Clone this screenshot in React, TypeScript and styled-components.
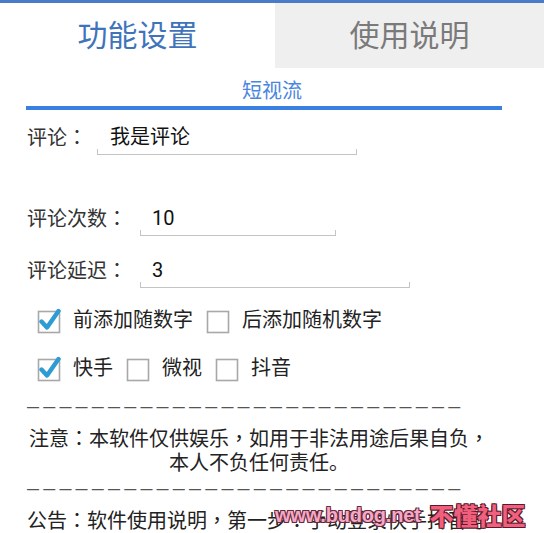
import React from "react";
import styled, { createGlobalStyle } from "styled-components";

const Global = createGlobalStyle`
  html, body { margin: 0; padding: 0; background: #fff; }
  body { font-family: Roboto, "Noto Sans CJK SC", sans-serif; color: #222; }
  * { box-sizing: border-box; }
`;

const Page = styled.div`
  position: relative;
  width: 544px;
  height: 533px;
  overflow: hidden;
  background: #fff;
`;

const TopLine = styled.div`
  height: 3px;
  background: #4a7bc6;
`;

const Tabs = styled.div`
  display: flex;
  height: 65px;
`;

const Tab = styled.div<{ $active?: boolean }>`
  display: flex;
  align-items: center;
  justify-content: center;
  padding-bottom: 5px;
  width: ${(p) => (p.$active ? "275px" : "auto")};
  flex: ${(p) => (p.$active ? "none" : "1")};
  background: ${(p) => (p.$active ? "#fff" : "#efefef")};
  color: ${(p) => (p.$active ? "#3f74bb" : "#7a7a7a")};
  font-family: "Noto Sans CJK SC", sans-serif;
  font-size: 30px;
  line-height: 1;
`;

const SubTitle = styled.div`
  text-align: center;
  color: #4a86e0;
  font-family: "Noto Sans CJK SC", sans-serif;
  font-size: 20px;
  line-height: 28px;
  margin-top: 8px;
`;

const Divider = styled.div`
  height: 4px;
  margin: 2px 42px 0 26px;
  background: #3a80e2;
`;

const P = styled.span`
  font-family: "Noto Sans CJK TC", "Noto Sans CJK SC", sans-serif;
`;

const FieldRow = styled.div<{ $top: number }>`
  display: flex;
  align-items: flex-start;
  margin-top: ${(p) => p.$top}px;
  padding-left: 27px;
`;

const Label = styled.div`
  font-size: 20px;
  line-height: 30px;
  height: 32px;
  color: #333;
  white-space: nowrap;
`;

const Field = styled.div<{ $width: number; $gap: number; $pad: number }>`
  position: relative;
  width: ${(p) => p.$width}px;
  margin-left: ${(p) => p.$gap}px;
  height: 33px;
  padding-left: ${(p) => p.$pad}px;
  border-bottom: 1px solid #c4c4c4;
  font-size: 20px;
  line-height: 30px;
  color: #111;
  &::before,
  &::after {
    content: "";
    position: absolute;
    bottom: 0;
    width: 1px;
    height: 5px;
    background: #c4c4c4;
  }
  &::before { left: 0; }
  &::after { right: 0; }
`;

const CheckRow = styled.div<{ $top: number }>`
  display: flex;
  align-items: center;
  margin-top: ${(p) => p.$top}px;
  padding-left: 37px;
  height: 25px;
`;

const CheckItem = styled.div`
  display: flex;
  align-items: center;
  gap: 12px;
  margin-right: 13px;
  font-size: 20px;
  line-height: 25px;
  color: #222;
  white-space: nowrap;
`;

const Box = styled.svg`
  flex: none;
  display: block;
`;

const Checkbox = ({ checked }: { checked?: boolean }) => (
  <Box width="24" height="26" viewBox="0 0 24 26">
    <rect x="1.5" y="3.5" width="21" height="21" fill="#fff" stroke="#a8a8a8" strokeWidth="1.6" />
    {checked && (
      <path
        d="M4.5 13.5 L10 19.5 L21.5 3"
        fill="none"
        stroke="#2e9bd4"
        strokeWidth="4.4"
        strokeLinecap="round"
        strokeLinejoin="round"
      />
    )}
  </Box>
);

const Dashes = styled.div<{ $top: number }>`
  margin-top: ${(p) => p.$top}px;
  padding-left: 27px;
  height: 12px;
  font-family: "Liberation Sans", sans-serif;
  font-size: 12px;
  line-height: 12px;
  font-weight: bold;
  letter-spacing: 4.2px;
  color: #555;
  white-space: nowrap;
`;

const Notice = styled.div`
  width: 470px;
  margin: 13px 0 0 24px;
  text-align: center;
  font-size: 20px;
  line-height: 24px;
  color: #222;
  white-space: nowrap;
`;

const Announce = styled.div`
  margin-top: 12px;
  padding-left: 27px;
  font-size: 20px;
  line-height: 26px;
  color: #222;
  white-space: nowrap;
`;

const Watermark = styled.div`
  position: absolute;
  left: 275px;
  top: 502px;
  display: flex;
  align-items: center;
  gap: 9px;
  font-family: "Liberation Sans", "Noto Sans CJK SC", sans-serif;
  font-weight: bold;
  line-height: 26px;
  white-space: nowrap;
`;

const WmUrl = styled.span`
  color: #f4a9c8;
  font-size: 20px;
  letter-spacing: -0.2px;
  text-shadow: -1px -1px 0 #6a2a3a, 1px -1px 0 #6a2a3a, -1px 1px 0 #6a2a3a, 1px 1px 0 #6a2a3a;
`;

const WmName = styled.span`
  color: #f0607e;
  font-family: "Noto Sans CJK SC", sans-serif;
  font-weight: 900;
  font-size: 24px;
  letter-spacing: 0px;
  text-shadow: -1px -1px 0 #5a1a2a, 1px -1px 0 #5a1a2a, -1px 1px 0 #5a1a2a, 1px 1px 0 #5a1a2a;
`;

const dashes = "—".repeat(27);

export default function App() {
  return (
    <Page>
      <Global />
      <TopLine />
      <Tabs>
        <Tab $active>功能设置</Tab>
        <Tab>使用说明</Tab>
      </Tabs>
      <SubTitle>短视流</SubTitle>
      <Divider />
      <FieldRow $top={12}>
        <Label>评论<P>：</P></Label>
        <Field $width={260} $gap={10} $pad={13}>我是评论</Field>
      </FieldRow>
      <FieldRow $top={48}>
        <Label>评论次数<P>：</P></Label>
        <Field $width={196} $gap={13} $pad={12}>10</Field>
      </FieldRow>
      <FieldRow $top={19}>
        <Label>评论延迟<P>：</P></Label>
        <Field $width={270} $gap={13} $pad={12}>3</Field>
      </FieldRow>
      <CheckRow $top={20}>
        <CheckItem><Checkbox checked />前添加随数字</CheckItem>
        <CheckItem><Checkbox />后添加随机数字</CheckItem>
      </CheckRow>
      <CheckRow $top={23}>
        <CheckItem><Checkbox checked />快手</CheckItem>
        <CheckItem><Checkbox />微视</CheckItem>
        <CheckItem><Checkbox />抖音</CheckItem>
      </CheckRow>
      <Dashes $top={20}>{dashes}</Dashes>
      <Notice>
        注意<P>：</P>本软件仅供娱乐<P>，</P>如用于非法用途后果自负<P>，</P>
        <br />
        本人不负任何责任。
      </Notice>
      <Dashes $top={8}>{dashes}</Dashes>
      <Announce>公告<P>：</P>软件使用说明<P>，</P>第一步<P>：</P>手动登录快手抖音号</Announce>
      <Watermark>
        <WmUrl>www.budog.net</WmUrl>
        <WmName>不懂社区</WmName>
      </Watermark>
    </Page>
  );
}
